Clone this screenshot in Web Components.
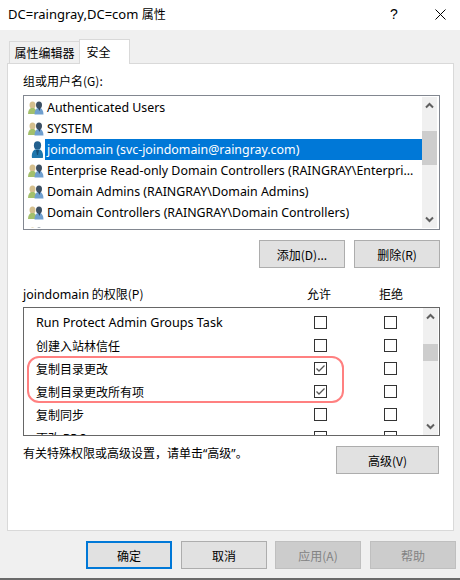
<!DOCTYPE html>
<html lang="zh-CN">
<head>
<meta charset="utf-8">
<title>DC=raingray,DC=com 属性</title>
<style>
  html, body { margin: 0; padding: 0; background: #f0f0f0; }
  body { font: 12px "Noto Sans CJK SC", "Noto Sans", sans-serif; color: #000; }
  .quote { font-family: "Noto Sans", sans-serif; }
  .note { line-height: 14px; align-self: flex-start; }
</style>
</head>
<body>

<props-dialog heading="DC=raingray,DC=com" suffix="属性">
  <group-list label="组或用户名(G):"></group-list>
  <panel-row style="margin-top:10px">
    <win-button>添加(D)...</win-button>
    <win-button>删除(R)</win-button>
  </panel-row>
  <perm-table user="joindomain" style="margin-top:15px"></perm-table>
  <panel-row style="--row-justify:space-between;margin-top:10px;padding-right:1px">
    <span class="note">有关特殊权限或高级设置，请单击<span class="quote">“</span>高级<span class="quote">”</span>。</span>
    <win-button style="--btn-width:103px">高级(V)</win-button>
  </panel-row>
</props-dialog>

<script>
const ZH = '"Noto Sans CJK SC", "Noto Sans", sans-serif';
const LATIN = '"Noto Sans", "Noto Sans CJK SC", sans-serif';

class WinButton extends HTMLElement {
  connectedCallback() {
    if (this.shadowRoot) return;
    this.attachShadow({ mode: "open" });
    this.shadowRoot.innerHTML = `
      <style>
        :host {
          display: flex;
          align-items: center;
          justify-content: center;
          box-sizing: border-box;
          width: var(--btn-width, 86px);
          height: 28px;
          background: #e1e1e1;
          border: 1px solid #adadad;
          font: 12px ${ZH};
          color: #000;
        }
        :host([primary]) { border: 2px solid #0078d7; }
        :host([disabled]) { background: #cccccc; border-color: #bfbfbf; color: #838383; }
      </style>
      <slot></slot>
    `;
  }
}

class UserIcon extends HTMLElement {
  connectedCallback() {
    if (this.shadowRoot) return;
    this.attachShadow({ mode: "open" });
    const single = this.hasAttribute("single");
    const svg = single ? `
      <svg width="16" height="20" viewBox="0 0 16 20">
        <ellipse cx="8.500" cy="5.500" rx="3.600" ry="4.200" fill="#23608f"/>
        <path d="M3 18c-.8-4 .8-7.500 3-8.500h5c2.200 1 3.600 4.500 2.800 8.500z" fill="#1f77ad"/>
        <path d="M7 10h3l-1 5h-1z" fill="#14507a"/>
      </svg>` : `
      <svg width="18" height="16" viewBox="0 0 18 16">
        <ellipse cx="5.500" cy="5" rx="3" ry="3.600" fill="#d4bf8e"/>
        <path d="M1 14c0-3.500 1.500-5.500 3-6h3c1.500.5 2.500 2.500 2.500 6z" fill="#a3c06c"/>
        <ellipse cx="12" cy="5" rx="3" ry="3.600" fill="#3b4f63"/>
        <path d="M7.500 14.500c0-3.500 1.500-6 3-6.500h3c1.500.5 3 3 3 6.500z" fill="#6f9fcf"/>
        <path d="M11 8h2.500l-1 3z" fill="#2c4560"/>
      </svg>`;
    this.shadowRoot.innerHTML = `
      <style>
        :host { display: flex; flex: none; align-items: center; justify-content: flex-end; width: 18px; height: 21px; }
        svg { display: block; }
      </style>
      ${svg}
    `;
  }
}

class ScrollTrack extends HTMLElement {
  connectedCallback() {
    if (this.shadowRoot) return;
    this.attachShadow({ mode: "open" });
    const top = this.getAttribute("thumb-top");
    const size = this.getAttribute("thumb-size");
    this.shadowRoot.innerHTML = `
      <style>
        :host {
          display: block;
          position: relative;
          flex: none;
          width: 15px;
          background: #f0f0f0;
        }
        .thumb { position: absolute; left: 0; right: 0; background: #cdcdcd; }
        svg { position: absolute; left: 3px; }
        .up { top: 5px; }
        .down { bottom: 5px; }
      </style>
      <svg class="up" width="9" height="7" viewBox="0 0 9 7"><path d="M1 5.500 4.500 2 8 5.500" fill="none" stroke="#606060" stroke-width="2"/></svg>
      <div class="thumb" style="top:${top}px;height:${size}px"></div>
      <svg class="down" width="9" height="7" viewBox="0 0 9 7"><path d="M1 1.500 4.500 5 8 1.500" fill="none" stroke="#606060" stroke-width="2"/></svg>
    `;
  }
}

class GroupList extends HTMLElement {
  connectedCallback() {
    if (this.shadowRoot) return;
    this.attachShadow({ mode: "open" });
    const rows = [
      ["Authenticated Users"],
      ["SYSTEM"],
      ["joindomain (svc-joindomain@raingray.com)", "single"],
      ["Enterprise Read-only Domain Controllers (RAINGRAY\\Enterprise Read-only Domain Controllers)"],
      ["Domain Admins (RAINGRAY\\Domain Admins)"],
      ["Domain Controllers (RAINGRAY\\Domain Controllers)"],
    ];
    this.shadowRoot.innerHTML = `
      <style>
        :host { display: block; }
        .label { height: 22px; font: 12px/16px ${ZH}; }
        .box {
          box-sizing: border-box;
          display: flex;
          width: 417px;
          height: 135px;
          padding: 1px 2px 1px 1px;
          border: 1px solid #828790;
          background: #fff;
        }
        .rows { flex: 1; min-width: 0; overflow: hidden; }
        .row { display: flex; height: 21px; padding-left: 2px; align-items: center; }
        .name {
          flex: 1;
          min-width: 0;
          height: 21px;
          padding: 0 5px 0 2px;
          box-sizing: border-box;
          font: 12.4px/21px ${LATIN};
          white-space: nowrap;
          overflow: hidden;
          text-overflow: ellipsis;
        }
        .selected { background: #0078d7; color: #fff; }
      </style>
      <div class="label">${this.getAttribute("label")}</div>
      <div class="box">
        <div class="rows">
          ${rows.map(([name, kind]) => `
            <div class="row">
              <user-icon ${kind === "single" ? "single" : ""}></user-icon>
              <div class="name ${kind === "single" ? "selected" : ""}">${name}</div>
            </div>`).join("")}
          <div class="row"><user-icon></user-icon></div>
        </div>
        <scroll-track thumb-top="34" thumb-size="34"></scroll-track>
      </div>
    `;
  }
}

class CheckMark extends HTMLElement {
  connectedCallback() {
    if (this.shadowRoot) return;
    this.attachShadow({ mode: "open" });
    this.shadowRoot.innerHTML = `
      <style>
        :host {
          display: block;
          box-sizing: border-box;
          width: 13px;
          height: 13px;
          border: 1px solid #333;
          background: #fff;
        }
        svg { display: block; }
      </style>
      ${this.hasAttribute("checked") ? `<svg width="11" height="11" viewBox="0 0 11 11"><path d="M1.500 5.500 4 8 9.500 2.500" fill="none" stroke="#555" stroke-width="1.300"/></svg>` : ""}
    `;
  }
}

class PermTable extends HTMLElement {
  connectedCallback() {
    if (this.shadowRoot) return;
    this.attachShadow({ mode: "open" });
    const perms = [
      ["Run Protect Admin Groups Task", false, true],
      ["创建入站林信任", false],
      ["复制目录更改", true],
      ["复制目录更改所有项", true],
      ["复制同步", false],
      ["更改 PDC", false],
    ];
    this.shadowRoot.innerHTML = `
      <style>
        :host { display: block; position: relative; }
        .head {
          display: grid;
          box-sizing: border-box;
          grid-template-columns: 236px 24px 24px;
          column-gap: 48px;
          height: 24px;
          padding-bottom: 3px;
          align-items: center;
          font: 12px ${ZH};
        }
        .head .latin { font: 12.4px ${LATIN}; }
        .head div { white-space: nowrap; }
        .box {
          box-sizing: border-box;
          display: flex;
          width: 417px;
          height: 129px;
          border: 1px solid #666;
          background: #fff;
        }
        .rows { flex: 1; min-width: 0; overflow: hidden; padding-top: 3px; }
        .row {
          display: grid;
          grid-template-columns: 221px 13px 13px;
          column-gap: 57px;
          height: 23px;
          padding-left: 12px;
          align-items: center;
          font: 12px/14px ${ZH};
        }
        .row .latin { font: 12.6px/14px ${LATIN}; }
        .row span { white-space: nowrap; }
        .gap { width: 1px; flex: none; }
        .ring {
          position: absolute;
          left: 4px;
          top: 73px;
          box-sizing: border-box;
          width: 317px;
          height: 47px;
          border: 2px solid #ff8080;
          border-radius: 12px;
        }
      </style>
      <div class="head">
        <div><span class="latin">${this.getAttribute("user")}</span> 的权限(P)</div>
        <div>允许</div>
        <div>拒绝</div>
      </div>
      <div class="box">
        <div class="rows">
          ${perms.map(([name, on, latin]) => `
            <div class="row">
              <span class="${latin ? "latin" : ""}">${name}</span>
              <check-mark ${on ? "checked" : ""}></check-mark>
              <check-mark></check-mark>
            </div>`).join("")}
        </div>
        <scroll-track thumb-top="36" thumb-size="17"></scroll-track>
        <div class="gap"></div>
      </div>
      <div class="ring"></div>
    `;
  }
}

class PanelRow extends HTMLElement {
  connectedCallback() {
    if (this.shadowRoot) return;
    this.attachShadow({ mode: "open" });
    this.shadowRoot.innerHTML = `
      <style>
        :host {
          display: flex;
          align-items: center;
          justify-content: var(--row-justify, flex-end);
          gap: 9px;
          height: 28px;
        }
      </style>
      <slot></slot>
    `;
  }
}

class PropsDialog extends HTMLElement {
  connectedCallback() {
    if (this.shadowRoot) return;
    this.attachShadow({ mode: "open" });
    this.shadowRoot.innerHTML = `
      <style>
        :host {
          display: flex;
          flex-direction: column;
          box-sizing: border-box;
          width: 460px;
          height: 580px;
          background: #f0f0f0;
          border-bottom: 2px solid #6a6a6a;
          overflow: hidden;
        }
        .titlebar {
          flex: none;
          display: flex;
          box-sizing: border-box;
          align-items: center;
          height: 30px;
          padding: 0 0 2px 8px;
          background: #fff;
          font: 13px ${LATIN};
        }
        .titlebar .grow { flex: 1; }
        .zh { font: 12px ${ZH}; }
        .help { width: 12px; margin-right: 35px; font: 14px "Liberation Sans", sans-serif; text-align: center; }
        .close { margin-right: 14px; display: block; }
        .tabs { flex: none; display: flex; align-items: flex-end; height: 33px; padding-left: 9px; position: relative; z-index: 1; }
        .tab {
          box-sizing: border-box;
          height: 22px;
          width: 71px;
          border: 1px solid #d9d9d9;
          border-bottom: none;
          background: #f0f0f0;
          text-align: center;
          font: 12px/22px ${ZH};
        }
        .tab.active {
          height: 25px;
          width: 51px;
          margin-bottom: -1px;
          margin-left: -1px;
          padding-right: 12px;
          background: #fff;
          line-height: 24px;
        }
        .panel {
          flex: none;
          box-sizing: border-box;
          width: 447px;
          height: 468px;
          margin-left: 7px;
          padding: 9px 13px 0 15px;
          border: 1px solid #d9d9d9;
          background: #fff;
        }
        .footer { display: flex; padding-left: 86px; gap: 9px; margin-top: 10px; }
        .footer win-button:nth-child(3) { margin-left: -1px; }
      </style>
      <div class="titlebar">
        <span>${this.getAttribute("heading")} <span class="zh">${this.getAttribute("suffix")}</span></span>
        <span class="grow"></span>
        <span class="help">?</span>
        <svg class="close" width="11" height="11" viewBox="0 0 11 11"><path d="M.5.500 10.500 10.500M10.500.5.500 10.500" stroke="#000" stroke-width="1" fill="none"/></svg>
      </div>
      <div class="tabs">
        <div class="tab">属性编辑器</div>
        <div class="tab active">安全</div>
      </div>
      <div class="panel">
        <slot></slot>
      </div>
      <div class="footer">
        <win-button primary>确定</win-button>
        <win-button>取消</win-button>
        <win-button disabled>应用(A)</win-button>
        <win-button disabled>帮助</win-button>
      </div>
    `;
  }
}

customElements.define("win-button", WinButton);
customElements.define("user-icon", UserIcon);
customElements.define("scroll-track", ScrollTrack);
customElements.define("group-list", GroupList);
customElements.define("check-mark", CheckMark);
customElements.define("perm-table", PermTable);
customElements.define("panel-row", PanelRow);
customElements.define("props-dialog", PropsDialog);
</script>
</body>
</html>
